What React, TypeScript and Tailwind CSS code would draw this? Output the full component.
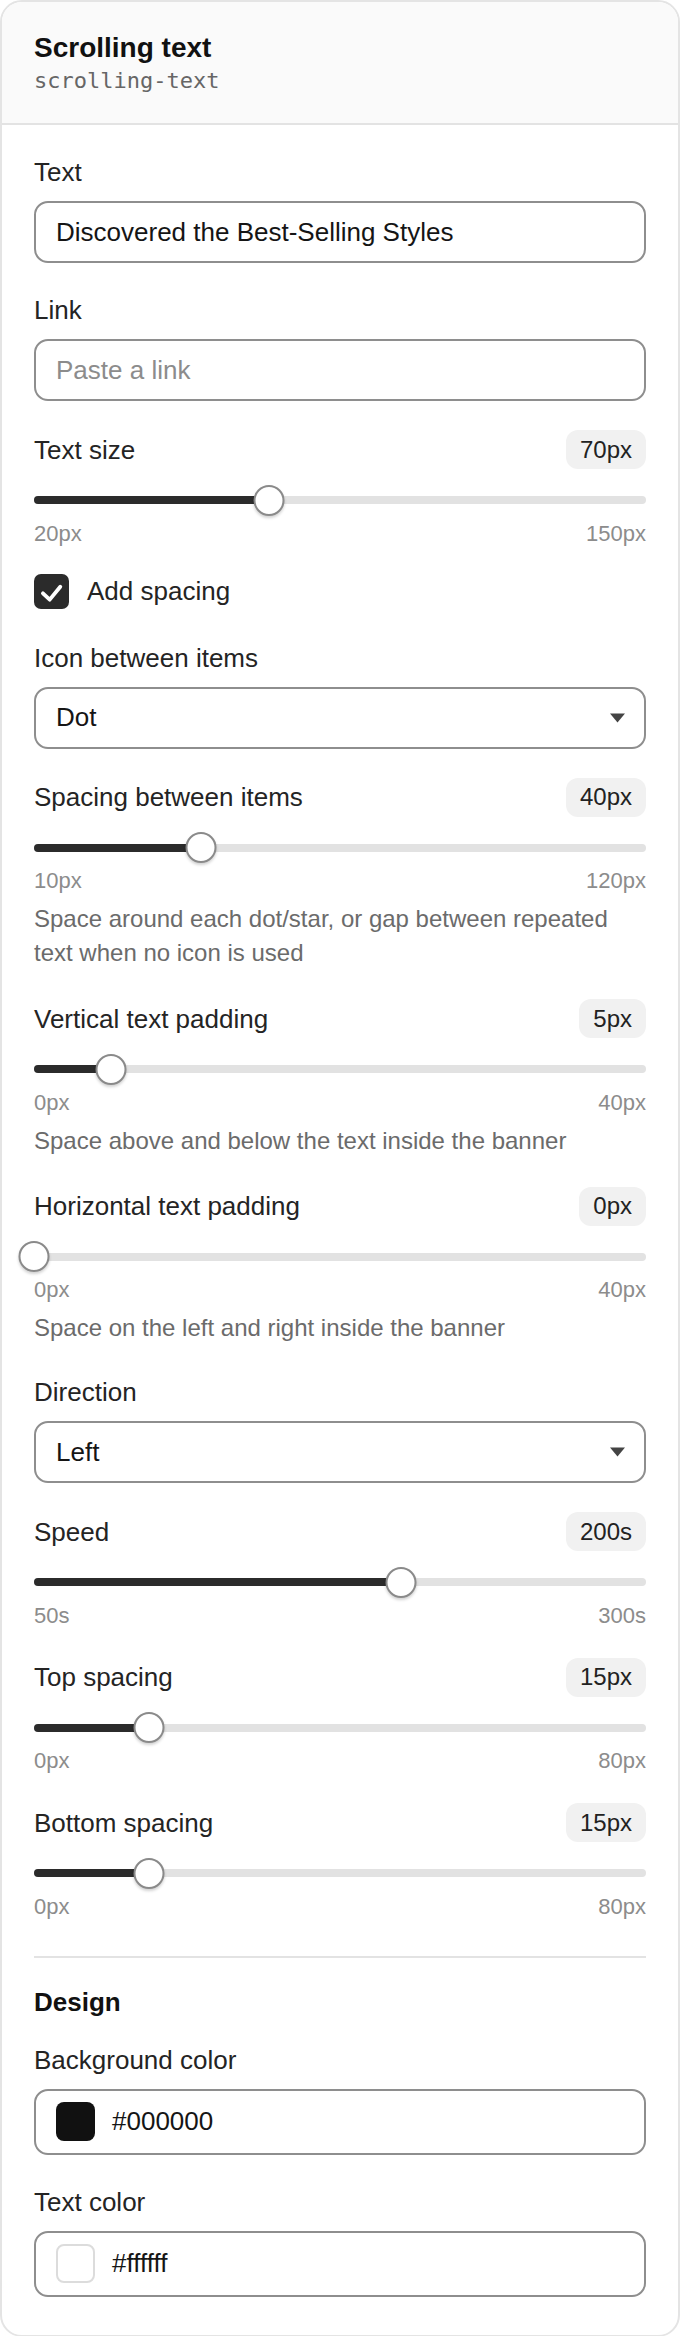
import React from "react";

type SliderProps = {
  label: string;
  value: number;
  min: number;
  max: number;
  unit: string;
  help?: string;
};

function RangeSetting({ label, value, min, max, unit, help }: SliderProps) {
  const pct = ((value - min) / (max - min)) * 100;
  return (
    <div className="flex flex-col">
      <div className="flex h-[39px] items-center justify-between">
        <span className="text-[26px] leading-[36px] text-[#242424]">{label}</span>
        <span className="flex h-[39px] items-center rounded-[12px] bg-[#f1f1f1] px-[14px] text-[24px] text-[#222]">
          {value}
          {unit}
        </span>
      </div>
      <div className="relative mt-[15.5px] h-[31px]">
        <div className="absolute left-0 right-0 top-[11.5px] h-[8px] rounded-full bg-[#e2e2e2]" />
        <div
          className="absolute left-0 top-[11.5px] h-[8px] rounded-full bg-[#2b2b2b]"
          style={{ width: `${pct}%` }}
        />
        <div
          className="absolute top-0 h-[31px] w-[31px] -translate-x-1/2 rounded-full border-2 border-[#8a8a8a] bg-white shadow-[0_2px_3px_rgba(0,0,0,0.18)]"
          style={{ left: `${pct}%` }}
        />
      </div>
      <div className="mt-[5px] flex justify-between text-[22px] leading-[26px] text-[#8c8c8c]">
        <span>
          {min}
          {unit}
        </span>
        <span>
          {max}
          {unit}
        </span>
      </div>
      {help && (
        <p className="mt-[8px] text-[24px] leading-[34px] text-[#6b6b6b]">{help}</p>
      )}
    </div>
  );
}

function FieldLabel({ children }: { children: React.ReactNode }) {
  return <div className="mb-[11px] text-[26px] leading-[36px] text-[#242424]">{children}</div>;
}

function TextField({ label, value, placeholder }: { label: string; value?: string; placeholder?: string }) {
  return (
    <div className="flex flex-col">
      <FieldLabel>{label}</FieldLabel>
      <div className="flex h-[62px] items-center rounded-[14px] border-2 border-[#8e8e8e] px-[20px] text-[26px]">
        {value ? (
          <span className="text-[#151515]">{value}</span>
        ) : (
          <span className="text-[#8c8c8c]">{placeholder}</span>
        )}
      </div>
    </div>
  );
}

function SelectField({ label, value }: { label: string; value: string }) {
  return (
    <div className="flex flex-col">
      <FieldLabel>{label}</FieldLabel>
      <div className="flex h-[62px] items-center justify-between rounded-[14px] border-2 border-[#8e8e8e] pl-[20px] pr-[19px] text-[26px] text-[#151515]">
        <span>{value}</span>
        <svg width="15" height="10" viewBox="0 0 15 10">
          <polygon points="0,0.5 15,0.5 7.5,9.5" fill="#444" />
        </svg>
      </div>
    </div>
  );
}

function ColorField({ label, color, bordered }: { label: string; color: string; bordered?: boolean }) {
  return (
    <div className="flex flex-col">
      <FieldLabel>{label}</FieldLabel>
      <div className="flex h-[66px] items-center gap-[17px] rounded-[14px] border-2 border-[#8e8e8e] px-[20px] text-[26px] text-[#151515]">
        <span
          className={
            bordered
              ? "h-[39px] w-[39px] rounded-[8px] border-2 border-[#dcdcdc] bg-white"
              : "h-[39px] w-[39px] rounded-[8px] bg-[#111]"
          }
        />
        <span>{color}</span>
      </div>
    </div>
  );
}

export default function App() {
  return (
    <div className="bg-white font-['Liberation_Sans',Arial,sans-serif]">
      <div className="overflow-hidden rounded-[22px] border-2 border-[#e4e4e4] bg-white">
        <div className="border-b-2 border-[#e3e3e3] bg-[#fafafa] px-[32px] pb-[28px] pt-[30px]">
          <div className="text-[28px] font-bold leading-[32px] text-[#111]">Scrolling text</div>
          <div className="mt-[3px] font-['DejaVu_Sans_Mono',monospace] text-[22px] leading-[28px] text-[#666]">
            scrolling-text
          </div>
        </div>

        <div className="px-[32px] pb-[38px] pt-[29px]">
          <div className="flex flex-col gap-[29px]">
            <TextField label="Text" value="Discovered the Best-Selling Styles" />
            <TextField label="Link" placeholder="Paste a link" />
            <RangeSetting label="Text size" value={70} min={20} max={150} unit="px" />

            <div className="-mt-[2px] mb-[2px] flex h-[35px] items-center gap-[18px]">
              <span className="flex h-[35px] w-[35px] items-center justify-center rounded-[7px] bg-[#2b2b2b]">
                <svg width="27" height="27" viewBox="0 0 24 24" fill="none">
                  <path
                    d="M4.4 13.6 L10.4 19.2 L19.8 7.8"
                    stroke="#fff"
                    strokeWidth="3.4"
                    strokeLinecap="round"
                    strokeLinejoin="round"
                  />
                </svg>
              </span>
              <span className="text-[26px] text-[#242424]">Add spacing</span>
            </div>

            <SelectField label="Icon between items" value="Dot" />
            <RangeSetting
              label="Spacing between items"
              value={40}
              min={10}
              max={120}
              unit="px"
              help="Space around each dot/star, or gap between repeated text when no icon is used"
            />
            <RangeSetting
              label="Vertical text padding"
              value={5}
              min={0}
              max={40}
              unit="px"
              help="Space above and below the text inside the banner"
            />
            <RangeSetting
              label="Horizontal text padding"
              value={0}
              min={0}
              max={40}
              unit="px"
              help="Space on the left and right inside the banner"
            />
            <SelectField label="Direction" value="Left" />
            <RangeSetting label="Speed" value={200} min={50} max={300} unit="s" />
            <RangeSetting label="Top spacing" value={15} min={0} max={80} unit="px" />
            <RangeSetting label="Bottom spacing" value={15} min={0} max={80} unit="px" />
          </div>

          <div className="mt-[36px] h-[2px] bg-[#e3e3e3]" />

          <div className="pt-[26px] text-[26px] font-bold leading-[36px] text-[#111]">Design</div>
          <div className="mt-[22px] flex flex-col gap-[29px]">
            <ColorField label="Background color" color="#000000" />
            <ColorField label="Text color" color="#ffffff" bordered />
          </div>
        </div>
      </div>
    </div>
  );
}
